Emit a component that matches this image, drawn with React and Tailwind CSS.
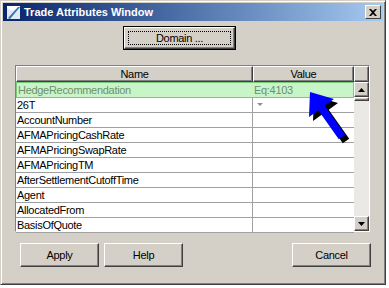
const ROWS = [
  '26T',
  'AccountNumber',
  'AFMAPricingCashRate',
  'AFMAPricingSwapRate',
  'AFMAPricingTM',
  'AfterSettlementCutoffTime',
  'Agent',
  'AllocatedFrom',
  'BasisOfQuote',
]

const raised =
  'bg-[#d4d0c8] border border-t-white border-l-white border-r-[#404040] border-b-[#404040] shadow-[inset_-1px_-1px_0_#808080]'

function Button({ children, className = '' }) {
  return (
    <div className={`${raised} h-[24px] flex items-center justify-center text-black ${className}`}>
      {children}
    </div>
  )
}

export default function App() {
  return (
    <div
      className="relative w-[389px] h-[288px] bg-white text-[11px] tracking-[-0.3px]"
      style={{ fontFamily: '"Liberation Sans", Arial, sans-serif' }}
    >
      <div className="w-[386px] h-[285px] bg-[#d4d0c8] border border-t-[#d4d0c8] border-l-[#d4d0c8] border-r-[#404040] border-b-[#404040] shadow-[inset_1px_1px_0_#fff,inset_-1px_-1px_0_#808080] p-[2px] flex flex-col">
        {/* Title bar */}
        <div className="h-[18px] bg-gradient-to-r from-[#0a246a] to-[#a6caf0] flex items-center pl-[3px] pr-[2px]">
          <svg width="16" height="16" viewBox="0 0 16 16" className="shrink-0">
            <path d="M1 15 L1 2 L14 2 L14 15 Z" fill="#fff" />
            <path d="M1 15 L1 4 Q6 9 14 3 L14 15 Z" fill="#dfe8f5" />
            <path d="M2 14 L12 3 L14 3 L4 15 Z" fill="#3a6fb0" />
          </svg>
          <span className="ml-[2px] text-white font-bold text-[11px] tracking-normal">Trade Attributes Window</span>
          <div className="ml-auto w-[16px] h-[14px] bg-[#d4d0c8] border border-t-white border-l-white border-r-[#404040] border-b-[#404040] flex items-center justify-center">
            <svg width="8" height="7" viewBox="0 0 8 7">
              <path d="M0 0 L2 0 L4 2 L6 0 L8 0 L5 3.5 L8 7 L6 7 L4 5 L2 7 L0 7 L3 3.5 Z" fill="#000" />
            </svg>
          </div>
        </div>

        {/* Domain */}
        <div className="mt-[5px] ml-[120px] w-[113px] h-[24px] border border-black">
          <div className={`${raised} h-full p-[3px]`}>
            <div className="h-full border border-dotted border-black flex items-center justify-center">Domain ...</div>
          </div>
        </div>

        {/* Table */}
        <div className="mt-[15px] ml-[12px] w-[355px] h-[167px] bg-white border border-t-[#808080] border-l-[#808080] border-r-white border-b-white flex">
          <div className="w-[338px] flex flex-col">
            <div className="flex h-[16px] shrink-0">
              <div className={`${raised} w-[237px] flex items-center justify-center`}>Name</div>
              <div className={`${raised} w-[101px] flex items-center justify-center`}>Value</div>
            </div>
            <div className="flex h-[16px] shrink-0 bg-[#c8f5c8] border border-[#7cc87c] text-[#6f8f6f]">
              <div className="w-[236px] pl-[1px] flex items-center">HedgeRecommendation</div>
              <div className="flex-1 pl-[1px] flex items-center">Eq:4103</div>
            </div>
            {ROWS.map((name, i) => (
              <div key={name} className="flex h-[15px] shrink-0 border-b border-[#a0a0a0] text-black">
                <div className="w-[237px] pl-[1px] border-r border-[#a0a0a0] flex items-center">{name}</div>
                <div className="flex-1 pl-[4px] flex items-center">
                  {i === 0 && (
                    <svg width="6" height="4" viewBox="0 0 6 4">
                      <path d="M0 0 L6 0 L3 3 Z" fill="#909090" />
                    </svg>
                  )}
                </div>
              </div>
            ))}
          </div>

          {/* Scrollbar */}
          <div className="w-[16px] flex flex-col">
            <div className={`${raised} h-[16px] shrink-0`} />
            <div className={`${raised} h-[15px] shrink-0 flex items-center justify-center`}>
              <svg width="7" height="4" viewBox="0 0 7 4">
                <path d="M0 4 L7 4 L3.5 0 Z" fill="#000" />
              </svg>
            </div>
            <div className={`${raised} h-[4px] shrink-0`} />
            <div className="flex-1 bg-[#ebe9e5]" />
            <div className={`${raised} h-[15px] shrink-0 flex items-center justify-center`}>
              <svg width="7" height="4" viewBox="0 0 7 4">
                <path d="M0 0 L7 0 L3.5 4 Z" fill="#000" />
              </svg>
            </div>
          </div>
        </div>

        {/* Bottom buttons */}
        <div className="mt-[11px] ml-[17px] mr-[12px] flex">
          <Button className="w-[79px]">Apply</Button>
          <Button className="w-[79px] ml-[5px]">Help</Button>
          <Button className="w-[79px] ml-auto">Cancel</Button>
        </div>
      </div>

      {/* Pointer arrow */}
      <svg className="absolute left-0 top-0 pointer-events-none" width="389" height="288" viewBox="0 0 389 288">
        <polygon
          points="314,96 338,103 328.7,109.7 349.2,138.7 342.8,143.3 322.3,114.3 313,121"
          fill="#000"
        />
        <polygon
          points="310,92 334,99 324.7,105.7 345.2,134.7 338.8,139.3 318.3,110.3 309,117"
          fill="#0000ff"
        />
      </svg>
    </div>
  )
}
